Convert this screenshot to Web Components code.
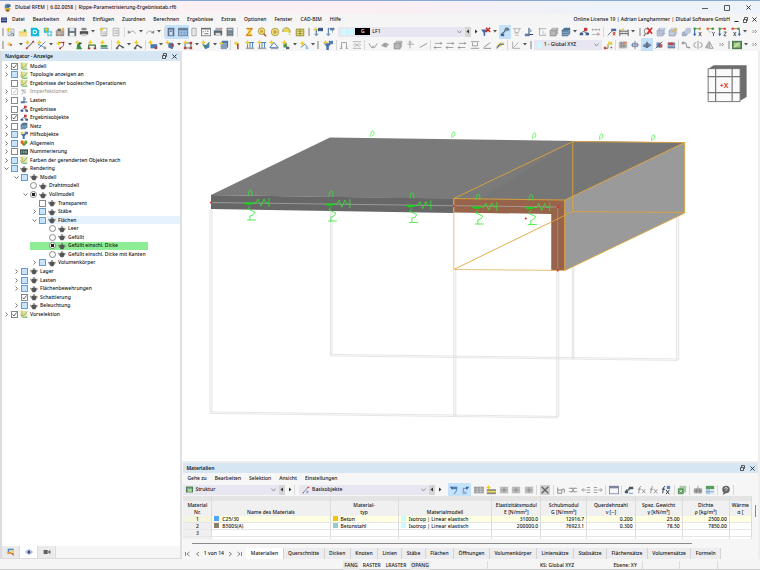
<!DOCTYPE html>
<html lang="de">
<head>
<meta charset="utf-8">
<title>Dlubal RFEM</title>
<style>
html,body{margin:0;height:100%}
body{font:500 5px/7px "Noto Sans","Open Sans",sans-serif;color:#111;background:#f5f5f5;overflow:hidden}
</style>
</head>
<body>
<rf-app></rf-app>
<script>
const BASE = `*{box-sizing:border-box}
button,select,input{font:inherit;color:inherit;margin:0;padding:0;border:0;background:none;border-radius:0;outline:0}
svg{display:block}`;
const define = (name, css, html, init) => customElements.define(name, class extends HTMLElement {
  constructor(){ super(); this.attachShadow({mode:'open'}); }
  connectedCallback(){
    this.shadowRoot.innerHTML = `<style>${BASE}${css}</style>` + (typeof html === 'function' ? html(this) : html);
    if (init) init(this);
  }
});

/* ---- icons, all on a 12 x 12 grid ---- */
const star = (x,y) => `<path d="M${x} ${y-2.6}l.8 1.8 1.8.8-1.8.8-.8 1.8-.8-1.8-1.8-.8 1.8-.8z" fill="#f2cf1d" stroke="#d9b400" stroke-width=".3"/>`;
const L = (d,c='#777',w=1) => `<path d="${d}" fill="none" stroke="${c}" stroke-width="${w}"/>`;
const F = (d,c) => `<path d="${d}" fill="${c}"/>`;
const ICONS = {
  logo: F('M2 5a4 3.6 0 0 1 8-1l-3 1v2H3z','#5588b5')+F('M3 6h6l-1 4-3 1-3-3z','#e0b320')+F('M5 3h3v2H5zM4 8h3v2H4z','#4d5864'),
  app: F('M0 1h12v10H0z','#2b3a7a')+L('M1 4h10M1 7h10','#c4cbe5',1),
  doc: F('M2 2h8v9H2z','#fff')+L('M2.5 2.5h7v8h-7zM4 5h4M4 7h4M4 9h3','#6a7f88',.8)+L('M6 8h3v3','#3b7fb0',1)+star(3,3),
  open: F('M1 5h4l1 1h5v5H1z','#e9cf6c')+F('M2 7h9l-1 4H1z','#f3df8c')+F('M6 5l2-3 3 3H9v1H7V5z','#56a845'),
  cloud: F('M1 1h7l3 3v7H1z','#14b9dd')+L('M4 4h2a2 2 0 0 1 0 4H4z','#fff',1.2),
  cloud2: F('M1 1h6v6H1z','#2cbde0')+F('M5 5h6v6H5z','#67c9df')+L('M6 8h4M8 6v4','#fff',1)+star(4,3),
  cam: F('M1 4h10v7H1z','#9d938c')+F('M3 2h4v3H3z','#6f6965')+L('M2 6h8M2 8h8M5 5v6','#e3d3c9',.7)+F('M8 1h3v3H8z','#e4b44b'),
  save: F('M1 1h10v10H1z','#626b72')+F('M3 1h6v4H3z','#dfe5e8')+F('M3 7h6v4H3z','#eef1f2'),
  print: F('M1 5h10v4H1z','#4b4e51')+F('M3 1h6v3H3z','#85898c')+F('M3 8h6v3H3z','#c9ccce'),
  report: F('M2 1h7l2 2v8H2z','#fff')+L('M2.5 1.5h7v9h-7zM4 4h5M4 6h5M4 8h5','#8c8c8c',.8),
  reportn: F('M2 1h7l2 2v8H2z','#fff')+L('M2.5 1.5h7v9h-7zM4 6h5M4 8h5M4 10h5','#8c8c8c',.8)+star(3,3),
  undo: L('M3 7c1-3 6-3 7 1','#999',1)+F('M1 4v4l4-1z','#888'),
  redo: L('M9 7c-1-3-6-3-7 1','#999',1)+F('M11 4v4l-4-1z','#888'),
  pane1: F('M2 1h8v10H2z','#5a6f8c')+F('M4 3h4v7H4z','#cfdeee')+F('M5 4h2v2H5z','#5a7ba6'),
  pane2: F('M0 1h12v10H0z','#6a7f9b')+F('M1 4h10v6H1z','#9fc0e2')+L('M1 7h10M4 4v6M8 4v6','#7b9ec4',.7),
  pane3: L('M3.500 1.500h5v9h-5z','#999',1)+F('M5 3h2v6H5z','#ddd'),
  con: F('M0 1h12v10H0z','#6c7276')+F('M1 3h10v7H1z','#fff')+L('M2 5l1 1-1 1M5 5h1M7 5h2M4 8h5','#444',.9),
  print2: F('M1 4h10v6H1z','#5a6470')+F('M3 1h6v3H3z','#9ba9b8')+F('M3 7h6v3H3z','#d7d7d7')+F('M9 1h2v2H9z','#c95a5a'),
  calc: F('M2 1h8v10H2z','#5e6a75')+F('M3 2h6v2H3z','#cdd8e0')+L('M3 6h6M3 8h6M3 10h6','#b8c4cc',.8),
  zfill: F('M3 1h8l-3 5 2 5H1l4-5z','#f2da45')+L('M3 2h7L3 10h7','#c5532c',1),
  search: `<circle cx="5.500" cy="5" r="4" fill="#f4e067" stroke="#8b8340" stroke-width=".8"/><circle cx="5.500" cy="5" r="1.800" fill="#c9a24c"/>`+L('M8 8l3 3','#b5432c',1.6),
  gear: `<circle cx="6" cy="6" r="4.500" fill="#f0df6e" stroke="#8b8340" stroke-width=".8"/><circle cx="6" cy="6" r="2" fill="#c8905a"/>`,
  bubble: F('M1 6a4.500 4 0 1 1 6 3l4 1-4-4z','#e6d556')+L('M1 6a4.500 4 0 1 1 8 1','#8b8340',.8),
  boxsel: F('M1 2h10v9H1z','#eadf6a')+L('M1.500 2.500h9v8h-9zM3 5h6M3 8h6M6 3v7','#75703c',.8),
  load: L('M4 3h8','#8a98a8',1)+F('M6 1h6v4H6z','#35588c')+L('M4 3v7','#3571b5',1.2)+F('M1 8h6l-3 3z','#7c96b5')+star(3,3),
  load2: L('M4 2h8M9 2v5','#98a2ac',1)+F('M6 1h5v3H6z','#5c7da8')+L('M4 1v9','#3571b5',1.2)+F('M1 8h6l-3 3z','#7c96b5'),
  filterx: F('M0 3h8L5 7v4L3 10V7z','#3f6ea8')+L('M6 1l5 5M11 1L6 6','#d3221e',1.8),
  filter: F('M1 4h9L7 8v4H4V8z','#4674ad')+F('M7 1h5v4H7z','#5b7ca8')+star(3,3),
  support: L('M2 10c0-5 4-2 4-6s4-3 5 0','#49606f',1.3)+F('M6 2h4v3H6z','#6f8aa0')+F('M1 8h4v3H1z','#3b638e'),
  supp2: L('M1 2h10M3 2l1 6M9 2L8 6M4 10h4','#a5a5a5',.9)+F('M4 6h4v2H4z','#bbb'),
  lsup: L('M6 1v8M3 9h8','#2c3e63',1.2)+F('M1 8h6v3H1z','#5b7cab')+F('M6 3h3v3H6z','#8fa9cb'),
  dim: L('M2 2h9M3 1v9M3 10h8','#9a9a9a',.9)+L('M7 4v4h3','#bbb',.9),
  cube: F('M1 4l3-3h7v7l-3 3H1z','#b8b8b8')+L('M1.500 4.500h7v6h-7zM8.500 4.500l2.500-3','#8a8a8a',.8),
  mesh: F('M1 4l3-3h7v7l-3 3H1z','#4d7396')+L('M1 6.500h7l3-3M1 9h7l3-3M3.500 4v7M6 4v7M8.500 4v7','#aec4d8',.6),
  result: L('M1 9l4-4 6 3','#3d4e66',1)+F('M6 1h4v4H6z','#c33a3a')+F('M1 7h4v3H1zM8 7h4v3H8z','#3f5b92'),
  rline: L('M1 3h10M1 9h10M2 2v3M6 2v3M10 2v3','#9c9c9c',.8)+F('M7 7h3v3H7z','#c5a5a5'),
  rmem: F('M5 2h6v3H5z','#4568a0')+F('M7 6h3v4H7z','#d26a4c')+L('M1 10l5-5','#3d4e66',1),
  beam: L('M1 3v8M11 3v8M1 5h10M1 8h10','#555',1.100)+F('M3 2h3v2H3z','#d8cd4a')+L('M4 5v3M8 5v3','#777',.7),
  zoomx: `<circle cx="5" cy="5" r="3.500" fill="#eee" stroke="#777"/>`+L('M3 8l-2 3','#777',1.4)+L('M5 1l6 7M11 1L5 8','#da2722',1.8),
  bcube: F('M1 4l3-3h7v7l-3 3H1z','#c3cde0')+L('M1.500 4.500h7v6h-7zM8.500 4.500l2.500-3M4 1v7h7','#8b9ab8',.7),
  ycube: F('M1 4l3-3h7v7l-3 3H1z','#c4cdde')+L('M1.500 4.500h7v6h-7z','#8493ad',.7)+F('M5 5l5-4 1 2-5 4z','#e3b84a'),
  views: F('M1 7l2-2h5v4l-2 2H1z','#a3b0cb')+F('M5 3l2-2h5v5l-2 2H5z','#bdc6da'),
  axX: L('M2 2v7','#2b6bb5',1.300)+L('M2 2h7','#3aa24d',1)+`<circle cx="8" cy="2" r="1.500" fill="#e08a2c"/><circle cx="2" cy="2" r="1.500" fill="#3a9b48"/><path d="M0 8h4l-2 3z" fill="#2b6bb5"/>`+L('M7 6l3 5M10 6l-3 5','#444',1),
  axY: L('M2 2h8','#d48b43',1)+`<circle cx="2" cy="2" r="1.500" fill="#e0702c"/><circle cx="8" cy="2" r="1.500" fill="#3a9b48"/>`+L('M3 4l2 3','#999',.8)+L('M7 6l2 2 1.500-2M9 8v3','#444',1),
  axZ: L('M2 2v7','#2b6bb5',1.300)+L('M2 2h7','#c9503a',1)+`<circle cx="8" cy="2" r="1.500" fill="#d34f32"/><circle cx="2" cy="2" r="1.500" fill="#3a9b48"/><path d="M0 8h4l-2 3z" fill="#2b6bb5"/>`+L('M7 6h3l-3 4.500h3','#444',1),
  axXX: L('M2 2h8','#d34f32',1)+`<circle cx="9" cy="2" r="1.500" fill="#3a9b48"/><circle cx="2" cy="2" r="1.500" fill="#d34f32"/><path d="M8 8h4l-2 3z" fill="#2b6bb5"/>`+L('M10 3v6','#2b6bb5',1.2)+L('M3 6l3 5M6 6l-3 5','#444',1),
  node: star(4,5)+F('M5 5h2v2H5z','#c33'),
  line: L('M2 10L10 2','#777',1.300)+F('M1 9h2v2H1zM9 1h2v2H9z','#b33')+star(3,3),
  line2: L('M2 10L10 2M1 5l8 4','#4a80b8',1)+star(3,3)+F('M8 8h3v3H8z','#999'),
  arc: L('M3 3h6v4L5 10','#c55',1.200)+F('M8 2h2v2H8zM4 9h2v2H4z','#a22')+star(3,4),
  man: F('M4 4h3l1 4 2 3H3z','#3d8d45')+star(4,3)+F('M6 3h3v2H6z','#444'),
  frame: L('M2 10V6h8v4','#3f7b43',1.500)+F('M1 9h3v2H1zM8 9h3v2H8z','#a03d34')+star(4,3),
  mem: F('M2 6h8v3H2z','#4b9a5f')+L('M2 10h9','#4670a0',1)+star(4,3),
  msup: L('M2 10l3-4 5 3','#4a4a4a',1.300)+F('M1 9h3v2H1zM8 8h3v2H8z','#666')+star(4,3),
  surf: F('M3 5h8v5H3z','#4a7bb0')+F('M8 8h3v3H8z','#b8423b')+star(3,3),
  solid: F('M4 4l5-1 2 3-2 5-5-2z','#5179a8')+F('M7 5h3v3H7z','#b04545')+star(3,3),
  dash: L('M2.500 3.500h7v6h-7z','#57748f',1.3)+F('M1 8h3v3H1zM8 2h3v3H8zM8 8h3v3H8z','#b8443b')+star(3,3),
  free: F('M2 5l4 1 4-4v7l-5 2z','#4f7fb2')+L('M2 5l3 4 5-6','#3a8c4d',1.2)+star(3,3),
  block: F('M2 4h7v7H2z','#839dbb')+F('M2 4l2-3h7v7l-2 3V4z','#4c77aa')+star(3,4),
  pin: F('M6 4h2v7H6z','#b34a3e')+star(5,4),
  loadb: L('M2 3h9M3 3v7M6 3v7M9 3v7','#3471b4',1)+F('M1 9h10v2H1z','#a9a9a9')+star(3,3),
  loadc: L('M1 9l5-6 5 6z','#3471b4',1)+F('M2 9h9v2H2z','#96a8b8')+star(3,3),
  coil: F('M3 4h4v5H3z','#4a945a')+F('M6 8h4v3H6z','#58636e')+star(4,3),
  chart: L('M2 9l5-4 4 5','#4f8ec4',1.200)+F('M8 8h3v3H8z','#9bc4de')+star(4,4),
  gate: L('M3 10V3h6v7M1 10h3M8 10h3','#9c9c9c',1.1),
  wave: L('M1 2h10M1 10h10M3 4l6 4M9 4L3 8M1 6h2M9 6h2','#a0a0a0',.9),
  vshape: L('M1 4l3 5h4l3-5','#9a9a9a',1.100)+F('M5 7h2v3H5z','#aaa'),
  plane: F('M1 7l5-4 5 2-4 4z','#a5a5a5')+L('M4 4l4 5','#888',.8),
  arrows: L('M6 10V2M3 5h8M4 3l2-2 2 2','#9a9a9a',1),
  slash: L('M2 9l9-5','#999',1.200),
  diag: L('M2 4h9M1 9h9','#929292',1)+F('M9 2l2 2-2 2zM3 7L1 9l2 2z','#929292'),
  diagb: L('M1 2h10M1 10h10M3 3v4h6V3','#909090',1),
  diagc: L('M2 9l8-6M2 10h9','#949494',1.200),
  hand: F('M1 8l5-5h5L7 8z','#ebce50')+L('M2 10l4-5h5','#3c6cb0',1.3),
  axes: L('M2 2v8h9M3 9l6-6','#a0a0a0',1),
  cs: L('M2 10h4V5h5','#58966a',1.200)+F('M6 2h5v4H6z','#e4d14f')+F('M1 8h3v3H1zM9 8h2v2H9z','#c4473d'),
  snap: F('M1 2h10v8H1z','#b9b9b9')+L('M2 4h8M2 7h8M4 2v8M7 2v8','#777',.7)+F('M6 2h4v3H6z','#d98e63'),
  snap2: L('M6 1v10M1 6h10','#6e7ca0',1)+L('M3 4h6v4H3z','#6e7ca0',1),
  sphere: F('M1 6l5-3 5 2-5 4z','#7c8aa5')+L('M1 7l5 2 5-3M6 2v7','#3f506f',1),
  sphb: F('M3 3h5v6H3z','#6a86b8')+F('M6 5h4v4H6z','#b35353')+L('M2 10l8-8','#555',1),
  sphc: F('M2 3h9v7H2z','#6d86ad')+F('M3 3h6v3H3z','#c24a4a')+L('M2 7h9','#ddd',.8),
  rot: L('M3 3l3 1 1 5h3','#8d8d8d',1.2)+F('M1 2h3v3H1zM8 8h3v2H8z','#999'),
  flip: L('M4 3a3 3 0 0 0 0 6M8 3a3 3 0 0 1 0 6M6 1v10','#8d8d8d',1),
  mirror: F('M5 2v8H1z','#aaa')+L('M7 3v7h4zM6 1v10','#888',.9),
  img: F('M0 1h12v10H0z','#4b7c50')+F('M2 3h8v6H2z','#a6cf83')+L('M2 9l7-6','#e9efe7',1.2),
  model: F('M1 1h10v10H1z','#cfe9bb')+L('M2 3l3 6 6-7','#c89a2c',1.2)+L('M1 7l3 4h7','#5aa052',1.2)+F('M1 1h3v3H1z','#e8c94a'),
  imp: L('M3 10l3-6 3-2','#b5b5b5',1.300)+F('M2 2h4v3H2z','#bcbcbc')+F('M6 5h3v3H6z','#c8c8c8'),
  heart: F('M6 11L1 6V3l3-1 2 2z','#e4572e')+F('M6 11l5-5V3L8 2 6 4z','#58a43d')+F('M3 2l3 2 3-2-3 5z','#ecb62d'),
  num: F('M0 2h12v8H0z','#3f5751')+L('M2 4v4M5 4v4M9 4v4M6 6h4','#a9cfc3',1),
  pot: F('M3 4h6l1 3-2 4H4L2 7z','#555')+F('M5 2h2v2H5z','#555')+L('M3 6L.500 4.500 1.500 7 4 9M9 5h2l-1 3','#666',.900),
  nav1: F('M1 1h9v8H1z','#4c88ce')+F('M3 3h8v5H3z','#e8d58c')+F('M1 6h5v3H1z','#df9c36')+L('M7 8l3 3','#c34a32',1.6),
  eye: L('M1 6c3-4 7-4 10 0-3 4-7 4-10 0z','#5c69a0',1)+`<circle cx="6" cy="6" r="2.300" fill="#30418c"/>`,
  video: F('M1 3h6v6H1zM8 5l3-2v6L8 7z','#5f5f5f'),
  base: L('M2 10L9 2','#6f7785',1.2)+F('M8 1h3v2H8zM1 9h2v2H1z','#d34b42')+L('M6 9h4M8 7v4','#4f7fb0',.9),
  turnL: L('M3 4h6v3l-3 4','#6f9ccb',1.4)+F('M1 2h4l-1 4z','#315f97')+F('M5 2h5v3H5z','#4f7db3'),
  turnR: L('M9 4H4v4l3 2','#6f9ccb',1.4)+F('M11 2H7l1 4z','#315f97')+F('M3 8h5v3H3z','#8fb3d8'),
  row: F('M0 2h12v8H0z','#9c9c9c')+L('M0 5h12M0 8h12M4 2v8M8 2v8','#cfcfcf',.7),
  rowy: F('M1 5h11v6H1z','#888')+F('M1 7h11v2H1z','#efd94d')+star(3,3),
  rowp: F('M1 2h10v8H1z','#bcbcbc')+L('M6 3v6M3 6h6','#8a8a8a',1.1),
  cross: F('M0 0h12v12H0z','#d0d0d0')+L('M2 2l8 8M10 2l-8 8','#686868',1.8),
  cup: L('M2 3v7h5V5h3v4M2 6h5','#919191',1.200),
  rx: L('M1 4h10M1 8h10M4 3l4 6M8 3l-4 6','#8f8f8f',1),
  arrl: L('M1 6h5M3 4L1 6l2 2M7 3h4M7 6h4M7 9h4','#909090',1),
  arrr: L('M1 3h4M1 6h4M1 9h4M6 6h5M9 4l2 2-2 2','#909090',1),
  win: F('M0 1h12v10H0z','#7c84a0')+F('M1 4h10v6H1z','#f7f7f7'),
  tree: L('M3 9V6h3V4h5','#3e4c60',1.300)+F('M6 2h5v3H6zM1 7h4v3H1z','#4b5563')+L('M6 10h5','#6aa3da',1.200),
  fx: L('M5 2c-2-1-2 2-3 8M1 5h4M6 5l4 5M10 5l-4 5','#858585',1),
  fxb: L('M5 2c-2-1-2 2-3 8M1 5h4M6 6l4 5M10 6l-4 5','#303a4c',1.200)+F('M7 1h4v4H7z','#5b86b9'),
  xls: F('M3 1h8v8H3z','#a8cba8')+F('M1 4h7v7H1z','#5a9560')+L('M3 6l3 3M6 6L3 9','#fff',1),
  tabimp: F('M1 4h10v6H1z','#ababab')+L('M1 7h10M4 4v6M8 4v6M6 1v4','#777',.8),
  tabcol: F('M1 1h10v4H1z','#57a05b')+F('M1 5h5v6H1z','#a7cbe8')+F('M6 5h5v6H6z','#d9e6ef')+L('M1 8h10','#7d9cb8',.8),
  help: `<circle cx="6" cy="5.500" r="4.500" fill="#666"/>`+L('M4.500 4.500c0-2 3-2 3 0 0 1-1.500 1-1.500 2.500','#fff',1)+F('M3 9l-1 3 4-2z','#666'),
  struct: F('M0 1h12v10H0z','#4b7c50')+F('M2 3h8v7H2z','#b3d99a')+L('M2 10V6l3-2h5','#3a6c9a',1)
};
define('rf-icon', ':host{display:block;width:10px;height:10px;flex:none}svg{width:100%;height:100%}',
  el => `<svg viewBox="0 0 12 12" aria-hidden="true">${ICONS[el.getAttribute('name')]||''}</svg>`);

/* ---- tool bar: groups share the width in proportion to their flex-grow ---- */
define('tool-button', `:host{display:flex;flex:none;align-items:center;justify-content:center;width:10px;height:12px}
  :host([on]){background:#c5e2fa;box-shadow:0 0 0 1px #c5e2fa}
  :host([caret]){width:4px}:host([step]){width:6px;height:10px}:host([sep]){width:1px;height:10px;background:#d8d8d8}
  :host([grip]){width:2px;height:8px;background:radial-gradient(circle,#bbb 50%,transparent 50%) 0 0/2px 2px}
  button{display:flex;width:100%;height:100%;align-items:center;justify-content:center}`,
  el => {
    const n = el.getAttribute('name');
    if (el.hasAttribute('sep') || el.hasAttribute('grip')) return '';
    if (el.hasAttribute('caret')) return `<button aria-label="Mehr"><svg width="4" height="3" viewBox="0 0 4 3"><path d="M0 0h4L2 2.500z" fill="#555"/></svg></button>`;
    if (el.hasAttribute('step')) return `<button aria-label="${n}"><svg width="4" height="5" viewBox="0 0 4 5"><path d="${n==='prev'?'M3 .500v4L.500 2.500z':'M1 .500v4l2.500-2z'}" fill="#333"/></svg></button>`;
    if (n === 'more') return `<button aria-label="Weitere"><svg width="5" height="5" viewBox="0 0 5 5">${L('M.500 1l1.500 1.500L.500 4M3 1l1.500 1.500L3 4','#666',.7)}</svg></button>`;
    return `<button aria-label="${n}"><rf-icon name="${n}"></rf-icon></button>`;
  });
define('combo-box', `:host{display:flex;flex:1;align-items:center;gap:2px;height:10px;padding:0 3px;background:#e8e7f1;min-width:0}
  select{flex:1;min-width:0;appearance:none;height:9px;line-height:7px}`,
  el => `<slot></slot><select aria-label="${el.getAttribute('label')}"><option>${el.getAttribute('value')}</option></select>
  <svg width="5" height="4" viewBox="0 0 5 4">${L('M.500.500l2 2.500 2-2.500','#777',.7)}</svg>`);
const toolGroup = (w, spec) => `<div class="g" style="flex-grow:${w}">` + spec.split(' ').map(t =>
  t === 'v' ? '<tool-button caret></tool-button>' : t === '|' ? '<tool-button sep></tool-button>' :
  t === ':' ? '<tool-button grip></tool-button>' : t === '<' ? '<tool-button step name="prev" style="background:#d5d5d5"></tool-button>' :
  t === '>' ? '<tool-button step name="next"></tool-button>' :
  t[0] === '*' ? `<tool-button on name="${t.slice(1)}"></tool-button>` : `<tool-button name="${t}"></tool-button>`).join('') + '</div>';
const TOOLCSS = `.bar{display:flex;align-items:center;height:13px}
  .g{display:flex;flex:1 1 0;min-width:0;align-items:center;justify-content:space-between}
  .sw{width:5px;height:6px;background:#c9fbff;flex:none}.gap{flex:1 1 0}
  .lc{background:#000;color:#fff;width:15px;height:7px;text-align:center;flex:none}`;
define('main-tools', `:host{display:block;background:#f6f6f6;padding:0 0 0 2px}${TOOLCSS}`,
  `<div class="bar">${toolGroup(94,': doc open cloud cloud2 cam save print v')}<i class="gap" style="flex-grow:4"></i>
  ${toolGroup(66,'reportn report | undo v redo v |')}<i class="gap" style="flex-grow:1"></i>
  ${toolGroup(73,'*pane1 *pane2 pane3 con print2 calc |')}<i class="gap" style="flex-grow:6"></i>
  ${toolGroup(92,'zfill search gear bubble boxsel : load load2')}<i class="gap" style="flex-grow:3"></i>
  <div class="g" style="flex-grow:128"><combo-box label="Lastfall" value="LF1"><i class="sw"></i><i class="sw"></i><span class="lc">G</span></combo-box></div>
  ${toolGroup(32,'< > filterx v')}<i class="gap" style="flex-grow:3"></i>
  ${toolGroup(136,'*support supp2 lsup dim cube mesh v result rline | rmem beam v')}<i class="gap" style="flex-grow:4"></i>
  ${toolGroup(122,': zoomx bcube ycube views axX axY axZ axXX v more')}</div>
  <div class="bar">${toolGroup(109,': node v line line2 v arc v man frame mem |')}<i class="gap" style="flex-grow:3"></i>
  ${toolGroup(115,'msup v msup | surf v solid v dash v free v block |')}<i class="gap" style="flex-grow:1"></i>
  ${toolGroup(86,'pin loadb loadb loadc coil v chart v :')}<i class="gap" style="flex-grow:4"></i>
  ${toolGroup(107,'filter | gate wave | vshape plane cube arrows slash |')}<i class="gap" style="flex-grow:1"></i>
  ${toolGroup(98,'diag diag diag diagb diagc hand | axes v :')}<i class="gap" style="flex-grow:2"></i>
  <div class="g" style="flex-grow:68"><combo-box label="Koordinatensystem" value="1 - Global XYZ"><i class="sw"></i></combo-box></div><i class="gap" style="flex-grow:1"></i>
  ${toolGroup(155,'cs | snap snap2 *sphere sphb sphc | rot flip mirror more : img v more')}</div>`);

/* ---- title and menu ---- */
const WINBTN = `<button aria-label="Minimieren"><svg width="6" height="6" viewBox="0 0 6 6">${L('M0 3.500h6','#333',.8)}</svg></button>`;
const MINBTN = `<button aria-label="Minimieren"><svg width="5" height="6" viewBox="0 0 5 6">${L('M.500 4.500h4','#222',1)}</svg></button>`;
const MAXBTN = `<button aria-label="Maximieren"><svg width="6" height="6" viewBox="0 0 6 6">${L('M.500.500h5v5h-5z','#333',.8)}</svg></button>`;
const RESTORE = `<button aria-label="Lösen"><svg width="5" height="6" viewBox="0 0 5 6">${L('M.500 2.500h3v3h-3zM1.500 2.500v-2h3v3h-1','#333',.8)}</svg></button>`;
const CLOSE = `<button aria-label="Schließen"><svg width="5" height="5" viewBox="0 0 5 5">${L('M.500.500l4 4M4.500.500l-4 4','#222',.9)}</svg></button>`;
define('title-bar', `:host{display:flex;align-items:center;height:14px;padding:0 9px 0 3px;gap:2px;border-top:1px solid #86a9d3;background:linear-gradient(90deg,#fbf0f1,#faeff3 50%,#eef2f9 78%)}
  b{flex:1;font-weight:inherit}div{display:flex;gap:16px}`,
  `<rf-icon name="logo"></rf-icon><b><slot></slot></b><div>${WINBTN}${MAXBTN}${CLOSE}</div>`);
define('menu-bar', `:host{display:flex;align-items:center;height:10px;gap:8px;white-space:nowrap}
  :host([main]){height:11px;padding:0 3px 0 0;gap:8px}:host(:not([main])){padding-left:4px}
  rf-icon{width:8px;height:6px;margin-right:-4px}.r{flex:1;display:flex;justify-content:flex-end;align-items:center;gap:4px}`,
  el => (el.hasAttribute('main') ? '<rf-icon name="app"></rf-icon>' : '') +
  el.getAttribute('items').split(',').map(t => `<button>${t}</button>`).join('') +
  (el.hasAttribute('main') ? `<div class="r"><slot></slot>${MINBTN}${RESTORE}${CLOSE}</div>` : ''));
define('panel-head', `:host{display:flex;align-items:center;gap:5px;height:10px;padding:0 3px;background:#d7e6f3;font-weight:600}
  span{flex:1}`, `<span><slot></slot></span>${RESTORE}${CLOSE}`);

/* ---- navigator ---- */
define('tree-item', `:host{display:flex;align-items:center;min-height:0;height:100%;white-space:nowrap}
  :host([dim]){color:#999}
  .x{width:9px;height:8px;display:flex;align-items:center;justify-content:center;flex:none}
  label{display:flex;align-items:center;gap:2px;flex:1;height:100%}
  :host([hit]){background:linear-gradient(#8ded95,#8ded95) 28px 0/118px 100% no-repeat}
  :host([sel]) label{background:linear-gradient(#e6f2fd,#e6f2fd) 8px 0 no-repeat}
  input{appearance:none;width:7px;height:7px;border:1px solid #888;background:#fff;flex:none}
  input[type=radio]{border-radius:50%}
  input[type=radio]:checked{background:radial-gradient(circle,#222 45%,#fff 50%)}
  input.part{background:#c9e3f8;border-color:#6a9ccb}
  .ck{position:relative;display:flex}.ck svg{position:absolute;left:1px;top:1px}
  :host([dim]) input{border-color:#ccc}
  rf-icon{width:8px;height:8px}`,
  el => {
    const a = n => el.getAttribute(n), lv = +a('lv'), k = a('kind'), radio = k[0] === 'r';
    const ex = a('ex');
    return `<i style="width:${[0,10,19,28,38][lv]}px;flex:none"></i><span class="x">${ex ? `<button aria-label="Aufklappen"><svg width="5" height="5" viewBox="0 0 5 5">${L(ex==='o'?'M.500 1.500l2 2 2-2':'M1.500.500l2 2-2 2','#555',.8)}</svg></button>` : ''}</span>
    <label><span class="ck"><input type="${radio?'radio':'checkbox'}" class="${k==='p'?'part':''}" ${k==='c'||k==='r1'?'checked':''}>${k==='c'?`<svg width="5" height="5" viewBox="0 0 5 5">${L('M.500 2.500l1.500 1.500 2.500-3.500',el.hasAttribute('dim')?'#bbb':'#444',.8)}</svg>`:''}</span><rf-icon name="${a('icon')}"></rf-icon><span><slot></slot></span></label>`;
  });
const TREE = [
 [0,'c','c','model','Modell'],[0,'c','p','model','Topologie anzeigen an'],[0,'','n','model','Ergebnisse der booleschen Operationen'],
 [0,'c','c','imp','Imperfektionen','dim'],[0,'c','n','lsup','Lasten'],[0,'','n','result','Ergebnisse'],[0,'c','c','result','Ergebnisobjekte'],
 [0,'c','n','mesh','Netz'],[0,'c','p','filter','Hilfsobjekte'],[0,'c','p','heart','Allgemein'],[0,'c','n','num','Nummerierung'],
 [0,'c','p','model','Farben der gerenderten Objekte nach'],[0,'o','p','pot','Rendering'],[1,'o','p','pot','Modell'],[2,'','r','pot','Drahtmodell'],
 [2,'o','r1','pot','Vollmodell'],[3,'','n','pot','Transparent'],[3,'c','p','pot','Stäbe'],[3,'o','p','pot','Flächen','sel'],
 [4,'','r','pot','Leer'],[4,'','r','pot','Gefüllt'],[4,'','r1','pot','Gefüllt einschl. Dicke','hit'],[4,'','r','pot','Gefüllt einschl. Dicke mit Kanten'],
 [3,'c','p','pot','Volumenkörper'],[1,'c','p','pot','Lager'],[1,'c','p','pot','Lasten'],[1,'c','p','pot','Flächenbewehrungen'],
 [1,'','c','pot','Schattierung'],[1,'c','p','pot','Beleuchtung'],[0,'c','c','model','Vorselektion']];
define('nav-panel', `:host{display:flex;flex-direction:column;background:#fff;border-left:2px solid #dcdce0;border-right:2px solid #dfdfe4}
  .body{flex:1;min-height:0;padding-top:1px}.tree{display:grid;grid-auto-rows:1fr;height:53%}
  .tabs{display:flex;height:13px;background:#f6f6f6;border-bottom:1px solid #dcdce0}
  .tabs button{width:18px;display:flex;align-items:center;justify-content:center;background:#ebebeb;border-right:1px solid #dcdcdc}
  .tabs .on{background:#fff}.tabs rf-icon{width:8px;height:8px}`,
  `<panel-head>Navigator - Anzeige</panel-head><div class="body"><div class="tree">${TREE.map(([lv,ex,k,ic,t,f]) =>
    `<tree-item lv="${lv}" ex="${ex}" kind="${k}" icon="${ic}" ${f||''}>${t}</tree-item>`).join('')}</div></div>
  <div class="tabs"><button aria-label="Daten"><rf-icon name="nav1"></rf-icon></button><button class="on" aria-label="Anzeige"><rf-icon name="eye"></rf-icon></button><button aria-label="Ansichten"><rf-icon name="video"></rf-icon></button></div>`);

/* ---- 3D view ---- */
const spring = (x,y) => `<g transform="translate(${x} ${y})" fill="none" stroke="#2ee82e" stroke-width=".8">
  <path d="M-3-7l1-5 2-1 1 2v4M1 0h4l2-4 3 7 3-7 2 4h3M18-5v9M-1 3l-2 3 7 3-2 3-3 1v4M-4 17h9"/>
  <path d="M-7 0h9M-5 1h6" stroke="#17d317" stroke-width="1.200"/></g>`;
const loop = (x,y) => `<path d="M${x-1} ${y+4}v-4l1.500-2.500 1.500 1v3l-2 1" fill="none" stroke="#57f057" stroke-width=".8"/>`;
define('model-view', ':host{display:block;background:#fff;min-width:0;min-height:0;overflow:hidden}svg{width:100%;height:100%}',
 `<svg viewBox="182 51 576 410" role="img" aria-label="Modell">
 <g fill="none" stroke="#dadada" stroke-width=".8"><path d="M210 209V413.500M212 209V412M330.500 205V356M332 205V355M454 270V416.500M456 270V416M557 270V418M559 270V417M572.500 213V359M574 213V359M677 216V360M679 215V360"/>
 <path d="M210 413.500L558 418M211 412L558 416.500M330.500 356L678 360.500M331 354.500L678 359" stroke="#e0e0e0"/></g>
 <path d="M330 137.500L685 142.500 565 200.500 211 195z" fill="#7a7a7a"/>
 <path d="M573 141.500L685 142.500 565 200.500 480 199z" fill="#767676"/>
 <path d="M211 195L454 198.500V213L211 209z" fill="#676767"/>
 <path d="M565 200.500L685 142.500V213L565 270.500z" fill="#9a9a9a"/>
 <path d="M454 198.500L565 200V270.500H551.500V214L454 212.500z" fill="#97644b"/>
 <path d="M211 202.500L558 207" stroke="#a6a6a6" stroke-width=".8"/><path d="M558 207V270" stroke="#b38d7b" stroke-width=".8"/>
 <g fill="none" stroke="#dba53a" stroke-width=".9"><path d="M454 198.500L573 141.500 685 142.500 565 200zM565 200V270.500L685 213V142.500M573 141.500V211.500L685 212.500M573 211.500L454 269.500"/><path d="M454 198.500V269.500L565 270.500" stroke="#e3ba6c"/></g>
 ${spring(251,203)}${spring(332,204)}${spring(413,205.500)}${spring(479,207)}${spring(532,207.500)}
 ${[[372,133],[453,134],[534,135],[601,136],[653,137]].map(p=>loop(...p)).join('')}
 <g fill="#f01818"><circle cx="211" cy="202.500" r="1"/><circle cx="454" cy="206" r="1"/><circle cx="558" cy="207" r="1"/><circle cx="526" cy="218.500" r="1"/><circle cx="558" cy="270.500" r="1"/></g>
 <g><path d="M708 69l6-4h33l-7 4zM740 69l7-4v32l-7 4z" fill="#6d6d6d"/><path d="M708.500 68.500h32v33h-32z" fill="#fafafa" stroke="#777"/>
 <path d="M716 68v33M732.500 68v33M708 76.500h33M708 92.500h33" stroke="#777" stroke-width="1.200"/>
 <text x="724.500" y="87.500" text-anchor="middle" font-size="7" font-weight="700" font-family="Open Sans" fill="#e23a3a">+X</text></g></svg>`);

/* ---- materials table ---- */
define('mat-table', `:host{display:block;overflow:hidden;background:#f0f0f0}
  table{border-collapse:separate;border-spacing:0;table-layout:fixed;width:100%;line-height:7px}
  th,td{padding:0;font-weight:inherit;border-right:1px solid #dcdcdc;overflow:hidden;white-space:nowrap}
  thead th{height:15px;vertical-align:bottom;background:#f0f0f0;line-height:7px}
  thead .s th{height:5px;background:#e4e4e4}
  tbody td,tbody th{height:7px;line-height:6px;border-bottom:1px solid #e6e6e6;background:#fff}
  tbody th{background:#efefef}tbody .on td{background:#ffffe1}tbody .on th{background:#f4f4de}
  .n{text-align:right;padding-right:2px}i{display:inline-block;width:5px;height:5px;margin:0 3px 0 2px;vertical-align:top}`,
  `<table><colgroup>${[29,118,68,94,49,46,48,47,47,22].map(w=>`<col style="width:${(w/5.68).toFixed(1)}%">`).join('')}</colgroup>
  <thead><tr class="s">${'<th></th>'.repeat(10)}</tr><tr><th>Material<br>Nr.</th><th>Name des Materials</th><th>Material-<br>typ</th><th>Materialmodell</th><th>Elastizitätsmodul<br>E [N/mm²]</th><th>Schubmodul<br>G [N/mm²]</th><th>Querdehnzahl<br>ν [--]</th><th>Spez. Gewicht<br>γ [kN/m³]</th><th>Dichte<br>ρ [kg/m³]</th><th>Wärme<br>α [</th></tr></thead>
  <tbody><tr class="on"><th>1</th><td><i style="background:#4fa8f7"></i>C25/30</td><td><i style="background:#f5c211"></i>Beton</td><td><i style="background:#c9fbff"></i>Isotrop | Linear elastisch</td><td class="n">31000.0</td><td class="n">12916.7</td><td class="n">0.200</td><td class="n">25.00</td><td class="n">2500.00</td><td></td></tr>
  <tr><th>2</th><td><i style="background:#8f7c68"></i>B500S(A)</td><td><i style="background:#98cbca"></i>Betonstahl</td><td><i style="background:#c9fbff"></i>Isotrop | Linear elastisch</td><td class="n">200000.0</td><td class="n">76923.1</td><td class="n">0.300</td><td class="n">78.50</td><td class="n">7850.00</td><td></td></tr>
  <tr><th>3</th>${'<td></td>'.repeat(9)}</tr><tr><th></th>${'<td></td>'.repeat(9)}</tr></tbody></table>`);
define('materials-panel', `:host{display:flex;flex-direction:column;background:#f6f6f6;padding-left:1px;border-top:2px solid #eee}
  ${TOOLCSS}.tb{display:flex}mat-table{flex:1;height:43px}
  .sb{width:6px;display:flex;justify-content:center;padding-top:9px}.sb i{width:1px;height:12px;background:#888}
  .hs{height:9px;padding:4px 66px 0 9px}.hs i{display:block;height:1px;background:#8a8a8a}
  .tabs{display:flex;align-items:stretch;height:11px;white-space:nowrap}
  .tabs button{flex:1 1 auto;background:#ededf0;border-right:1px solid #d4d4d4;padding:0 3px}
  .tabs .on{background:#fff}.tabs .nv{display:flex;width:63px;align-items:center;justify-content:space-between;padding:0 4px 0 2px;flex:none}
  .tabs .nv button{background:none;border:0;flex:none;padding:0}.fill{width:37px;flex:none}`,
  `<panel-head>Materialien</panel-head><menu-bar items="Gehe zu,Bearbeiten,Selektion,Ansicht,Einstellungen"></menu-bar>
  <div class="bar"><div class="g" style="flex-grow:96"><combo-box label="Tabelle" value="Struktur"><rf-icon name="struct" style="width:7px;height:7px"></rf-icon></combo-box></div>${toolGroup(16,'< > |')}
  <i class="gap" style="flex-grow:4"></i><div class="g" style="flex-grow:130"><combo-box label="Objekte" value="Basisobjekte"><rf-icon name="base" style="width:8px;height:8px"></rf-icon></combo-box></div>${toolGroup(14,'< >')}
  <i class="gap" style="flex-grow:6"></i>${toolGroup(21,'*turnL *turnR')}<i class="gap" style="flex-grow:4"></i>
  ${toolGroup(76,'row rowy rowp rowp rowp | cross')}<i class="gap" style="flex-grow:3"></i>
  ${toolGroup(182,'| cup rx arrl arrr | win | tree fx fx fxb | xls | tabimp tabcol | help |')}<i class="gap" style="flex-grow:24"></i></div>
  <div class="tb"><mat-table></mat-table><div class="sb"><i></i></div></div><div class="hs"><i></i></div>
  <div class="tabs"><div class="nv">${['M.500 1v4M4.500 1L2 3l2.500 2','M4 1L1.500 3 4 5'].map(d=>`<button aria-label="Zurück"><svg width="5" height="6" viewBox="0 0 5 6">${L(d,'#777',.9)}</svg></button>`).join('')}<span>1 von 14</span>${['M1 1l2.500 2L1 5','M4.500 1v4M.500 1L3 3 .500 5'].map(d=>`<button aria-label="Weiter"><svg width="5" height="6" viewBox="0 0 5 6">${L(d,'#777',.9)}</svg></button>`).join('')}</div>
  ${['Materialien','Querschnitte','Dicken','Knoten','Linien','Stäbe','Flächen','Öffnungen','Volumenkörper','Liniensätze','Stabsätze','Flächensätze','Volumensätze','Formeln'].map((t,i)=>`<button class="${i?'':'on'}">${t}</button>`).join('')}<i class="fill"></i></div>`);
define('status-bar', `:host{display:flex;align-items:center;height:11px;border-bottom:1px solid #ccc;padding-top:2px;white-space:nowrap}
  i{flex:1 1 0}.b{background:#e8e8e8;box-shadow:0 0 0 1px #e8e8e8}button{flex:none}
  div{display:flex;gap:5px}s{width:1px;height:9px;background:#dcdcdc}`,
  `<i style="flex-grow:341"></i><div><button class="b">FANG</button><button>RASTER</button><button>LRASTER</button><button class="b">OPANG</button></div><i style="flex-grow:58"></i><s></s><i style="flex-grow:51"></i><span>KS: Global XYZ</span><i style="flex-grow:39"></i><span>Ebene: XY</span><i style="flex-grow:5"></i><s></s><i style="flex-grow:36"></i><s></s><i style="flex-grow:36"></i><s></s><i style="flex-grow:42"></i>`);

define('rf-app', `:host{display:grid;grid-template-rows:auto auto auto minmax(0,1fr) auto;height:100vh}
  .main{display:grid;grid-template-columns:24% minmax(0,1fr)}
  .right{display:grid;grid-template-rows:minmax(0,1fr) auto;min-height:0;border-right:2px solid #eee}
  nav-panel,.main{min-height:0}`,
  `<title-bar>Dlubal RFEM | 6.02.0058 | Rippe-Parametrisierung-Ergebnisstab.rf6</title-bar>
  <menu-bar main items="Datei,Bearbeiten,Ansicht,Einfügen,Zuordnen,Berechnen,Ergebnisse,Extras,Optionen,Fenster,CAD-BIM,Hilfe">Online License 19 | Adrian Langhammer | Dlubal Software GmbH</menu-bar>
  <main-tools></main-tools>
  <div class="main"><nav-panel></nav-panel><div class="right"><model-view></model-view><materials-panel></materials-panel></div></div>
  <status-bar></status-bar>`);
</script>
</body>
</html>
